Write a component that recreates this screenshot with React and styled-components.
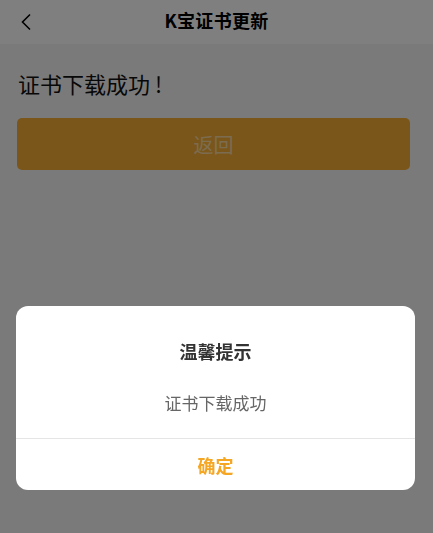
import React from 'react';
import styled, { createGlobalStyle } from 'styled-components';

const Global = createGlobalStyle`
  html, body {
    margin: 0;
    padding: 0;
    background: #f4f4f4;
    font-family: "Noto Sans CJK SC", "Noto Sans", "Liberation Sans", sans-serif;
  }
`;

const Page = styled.div`
  min-height: 533px;
  background: #f4f4f4;
`;

const NavBar = styled.div`
  height: 44px;
  background: #ffffff;
  display: flex;
  align-items: center;
  justify-content: center;
  position: relative;
`;

const BackIcon = styled.svg`
  position: absolute;
  left: 20px;
  top: 13px;
`;

const NavTitle = styled.div`
  font-size: 18px;
  font-weight: 700;
  color: #000;
  margin-top: -4px;
  letter-spacing: 0.3px;
`;

const Content = styled.div`
  padding: 24px 17px 0 17px;
`;

const Message = styled.div`
  font-size: 22px;
  line-height: 30px;
  color: #111;
  margin-left: 1px;
`;

const Bang = styled.span`
  margin-left: 5px;
`;

const BackButton = styled.div`
  margin-top: 20px;
  height: 52px;
  border-radius: 5px;
  background: #f4ac34;
  color: rgba(255, 255, 255, 0.55);
  font-size: 20px;
  display: flex;
  align-items: center;
  justify-content: center;
  margin-right: 6px;
`;

const Mask = styled.div`
  position: fixed;
  inset: 0;
  background: rgba(0, 0, 0, 0.5);
`;

const Dialog = styled.div`
  position: fixed;
  left: 16px;
  width: 399px;
  top: 306px;
  background: #fff;
  border-radius: 12px;
  overflow: hidden;
`;

const DialogTitle = styled.div`
  padding-top: 32px;
  text-align: center;
  font-size: 18px;
  font-weight: 700;
  color: #333;
  line-height: 26px;
`;

const DialogText = styled.div`
  text-align: center;
  font-size: 17px;
  color: #666;
  line-height: 24px;
  padding: 27px 0 23px;
`;

const DialogFooter = styled.div`
  border-top: 1px solid #e5e5e5;
  height: 51px;
  display: flex;
  align-items: center;
  justify-content: center;
  font-size: 18px;
  font-weight: 700;
  color: #f5a623;
`;

export default function App() {
  return (
    <Page>
      <Global />
      <NavBar>
        <BackIcon width="12" height="18" viewBox="0 0 12 18">
          <path d="M10 1.5 L2.5 9 L10 16.5" fill="none" stroke="#000" strokeWidth="1.6" />
        </BackIcon>
        <NavTitle>K宝证书更新</NavTitle>
      </NavBar>
      <Content>
        <Message>证书下载成功<Bang>!</Bang></Message>
        <BackButton>返回</BackButton>
      </Content>
      <Mask />
      <Dialog>
        <DialogTitle>温馨提示</DialogTitle>
        <DialogText>证书下载成功</DialogText>
        <DialogFooter>确定</DialogFooter>
      </Dialog>
    </Page>
  );
}
